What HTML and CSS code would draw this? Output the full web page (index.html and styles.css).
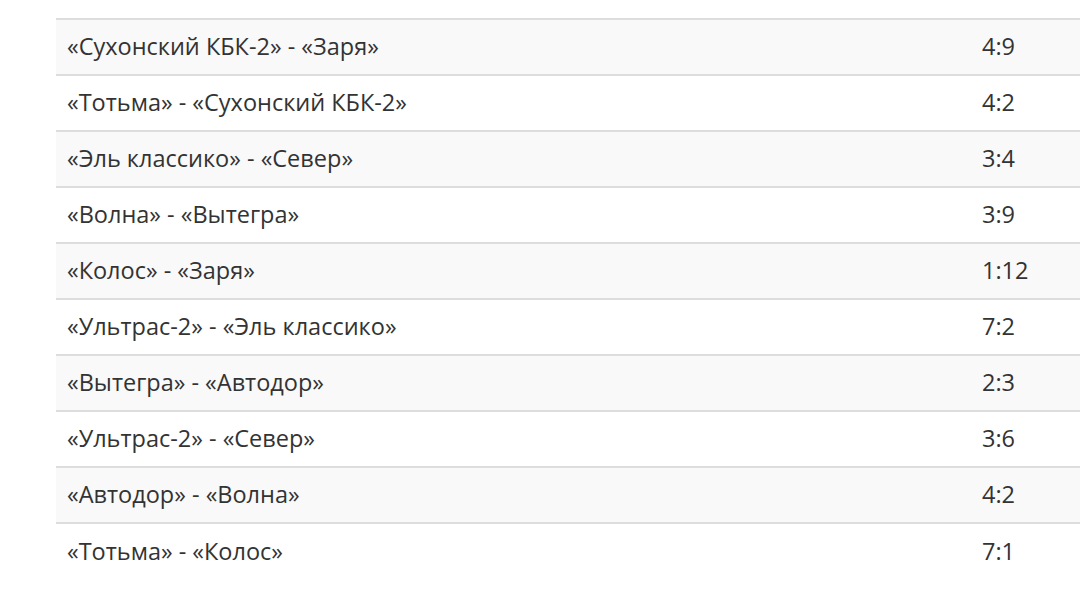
FILE: index.html
```html
<!DOCTYPE html>
<html lang="ru">
<head>
<meta charset="utf-8">
<link rel="stylesheet" href="styles.css">
</head>
<body>
<div class="wrap">
<table class="results">
<tbody>
<tr><td class="match">«Сухонский КБК-2» - «Заря»</td><td class="score">4:9</td></tr>
<tr><td class="match">«Тотьма» - «Сухонский КБК-2»</td><td class="score">4:2</td></tr>
<tr><td class="match">«Эль классико» - «Север»</td><td class="score">3:4</td></tr>
<tr><td class="match">«Волна» - «Вытегра»</td><td class="score">3:9</td></tr>
<tr><td class="match">«Колос» - «Заря»</td><td class="score">1:12</td></tr>
<tr><td class="match">«Ультрас-2» - «Эль классико»</td><td class="score">7:2</td></tr>
<tr><td class="match">«Вытегра» - «Автодор»</td><td class="score">2:3</td></tr>
<tr><td class="match">«Ультрас-2» - «Север»</td><td class="score">3:6</td></tr>
<tr><td class="match">«Автодор» - «Волна»</td><td class="score">4:2</td></tr>
<tr><td class="match">«Тотьма» - «Колос»</td><td class="score">7:1</td></tr>
</tbody>
</table>
</div>
</body>
</html>
```
FILE: styles.css
```css
html, body {
  margin: 0;
  padding: 0;
  background: #fff;
  overflow: hidden;
}
.wrap {
  padding: 18px 0 0 56px;
}
.results {
  border-collapse: collapse;
  table-layout: fixed;
  width: 1024px;
  font-family: "Open Sans", "Noto Sans", sans-serif;
  font-size: 23.5px;
  color: #333;
}
.results td {
  border-top: 2px solid #ddd;
  height: 56px;
  padding: 0 11px;
  vertical-align: middle;
  line-height: 1;
  box-sizing: border-box;
}
.results tr:nth-child(odd) {
  background: #f9f9f9;
}
.results td.match {
  width: 916px;
}
.results td.score {
  width: 108px;
  padding-left: 10px;
}
```
